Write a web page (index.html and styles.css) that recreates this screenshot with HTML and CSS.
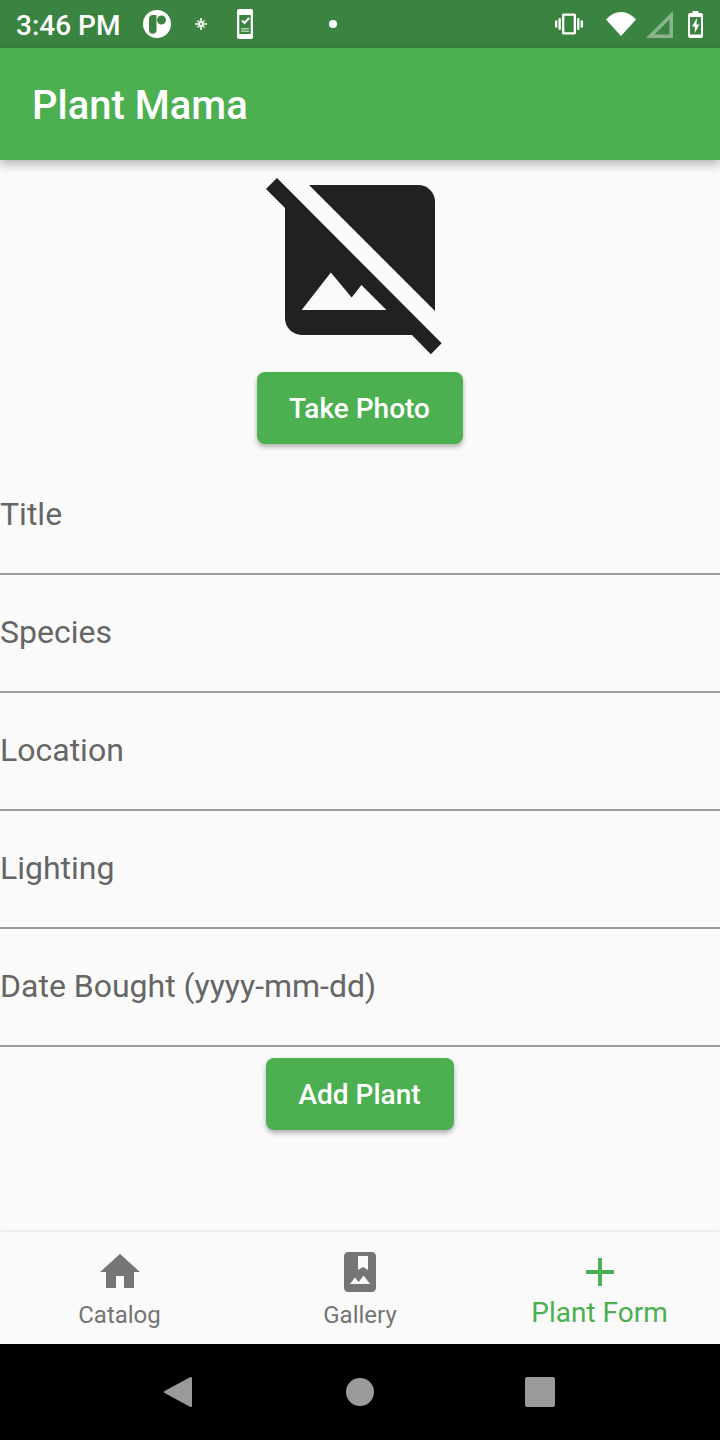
FILE: index.html
```html
<!DOCTYPE html>
<html lang="en">
<head>
    <meta charset="UTF-8">
    <meta name="viewport" content="width=device-width, initial-scale=1.0">
    <title>Plant Mama</title>
    <link rel="stylesheet" href="styles.css">
</head>
<body>
    <div class="screen">
        <div class="status-bar">
            <span class="clock">3:46 PM</span>
            <svg class="st-round" viewBox="0 0 28 28">
                <path fill="#fff" fill-rule="evenodd" d="M14 0a14 14 0 1 0 0 28 14 14 0 0 0 0-28zM6 9a4 4 0 0 1 4-4h3.500v15a3.750 3.750 0 0 1-7.500 0zM18.500 5.500a4.500 4.500 0 1 1 0 9 4.500 4.500 0 0 1 0-9z"/>
            </svg>
            <svg class="st-spark" viewBox="0 0 12 12">
                <path stroke="#fff" stroke-width="1.600" d="M6 0v12M0 6h12M2.500 2.500l7 7M9.500 2.500l-7 7"/>
                <circle cx="6" cy="6" r="1" fill="#3b8340"/>
            </svg>
            <svg class="st-phone" viewBox="0 0 16 30">
                <path fill="#fff" fill-rule="evenodd" d="M2 0h12a2 2 0 0 1 2 2v26a2 2 0 0 1-2 2H2a2 2 0 0 1-2-2V2a2 2 0 0 1 2-2zM2.300 6v19h11.400V6z"/>
                <path fill="none" stroke="#fff" stroke-width="2" d="M5 11.500l2.500 2.500 4.500-5"/>
                <path fill="#fff" opacity=".6" d="M4 19h8v1.500H4zM4 21.500h8V23H4z"/>
            </svg>
            <span class="st-dot"></span>
            <span class="status-right">
                <svg class="st-vibrate" viewBox="0 0 24 24">
                    <path fill="#fff" d="M0 15h2V9H0v6zm3 2h2V7H3v10zm19-8v6h2V9h-2zm-3 8h2V7h-2v10zM16.500 3h-9C6.670 3 6 3.670 6 4.500v15c0 .830.670 1.500 1.500 1.500h9c.830 0 1.500-.670 1.500-1.500v-15c0-.830-.670-1.500-1.500-1.500zM16 19H8V5h8v14z"/>
                </svg>
                <svg class="st-wifi" viewBox="0 0 30 24">
                    <path fill="#fff" d="M15 24L0 7.500C4 3 9.300 0 15 0s11 3 15 7.500z"/>
                </svg>
                <svg class="st-signal" viewBox="0 0 27 27">
                    <path fill="#fff" opacity=".4" fill-rule="evenodd" d="M27 0v27H0zM23.500 8.500L8.500 23.500h15z"/>
                </svg>
                <svg class="st-battery" viewBox="0 0 15 27">
                    <path fill="#fff" fill-rule="evenodd" d="M4.500 0h6v2H13a2 2 0 0 1 2 2v21a2 2 0 0 1-2 2H2a2 2 0 0 1-2-2V4a2 2 0 0 1 2-2h2.500zM2 6v17.500h11V6z"/>
                    <path fill="#fff" d="M9 7l-5 8.500h2.800V22l4.500-8.500H8.500z"/>
                </svg>
            </span>
        </div>

        <div class="app-bar">
            <h1 class="app-title">Plant Mama</h1>
        </div>

        <div class="content">
            <svg class="photo-icon" viewBox="0 0 24 24">
                <path fill="#212121" d="M21 5c0-1.100-.9-2-2-2H5.880L21 18.120V5z"/>
                <path fill="#212121" d="M2.040 2.160.72 3.480 3 5.760V19c0 1.100.9 2 2 2h13.240l2.260 2.300 1.300-1.300L2.040 2.160zM5 18l3.500-4.500 2.500 3.010L12.170 15l3 3H5z"/>
            </svg>
            <button class="btn">Take Photo</button>

            <div class="form">
                <div class="field">Title</div>
                <div class="field">Species</div>
                <div class="field">Location</div>
                <div class="field">Lighting</div>
                <div class="field">Date Bought (yyyy-mm-dd)</div>
            </div>

            <button class="btn btn-add">Add Plant</button>
        </div>

        <div class="bottom-nav">
            <div class="nav-item">
                <svg class="nav-icon" viewBox="0 0 24 24">
                    <path fill="#757575" d="M10 20v-6h4v6h5v-8h3L12 3 2 12h3v8z"/>
                </svg>
                <span class="nav-label nav-label-shift">Catalog</span>
            </div>
            <div class="nav-item">
                <svg class="nav-icon" viewBox="0 0 24 24">
                    <path fill="#757575" fill-rule="evenodd" d="M18 2H6c-1.100 0-2 .9-2 2v16c0 1.100.9 2 2 2h12c1.100 0 2-.9 2-2V4c0-1.100-.9-2-2-2zM11 4h5v7l-2.500-1.500L11 11V4zM7 18l2.500-3.210 1.790 2.150 2.500-3.220L17 18H7z"/>
                </svg>
                <span class="nav-label">Gallery</span>
            </div>
            <div class="nav-item nav-active">
                <svg class="nav-icon" viewBox="0 0 24 24">
                    <path fill="#4caf50" d="M19 13h-6v6h-2v-6H5v-2h6V5h2v6h6v2z"/>
                </svg>
                <span class="nav-label nav-label-shift">Plant Form</span>
            </div>
        </div>

        <div class="system-nav">
            <svg class="sys-back" viewBox="0 0 30 32">
                <path fill="#9a9a9a" d="M28 2v28L2 16z" stroke="#9a9a9a" stroke-width="2" stroke-linejoin="round"/>
            </svg>
            <span class="sys-home"></span>
            <span class="sys-recent"></span>
        </div>
    </div>
</body>
</html>
```

FILE: styles.css
```css
* {
    margin: 0;
    padding: 0;
    box-sizing: border-box;
}

body {
    background: #fafafa;
    font-family: Roboto, sans-serif;
}

.screen {
    width: 720px;
    height: 1440px;
    display: flex;
    flex-direction: column;
    overflow: hidden;
}

.status-bar {
    height: 48px;
    flex: none;
    display: flex;
    align-items: center;
    padding-left: 16px;
    background: #3b8340;
}

.clock {
    width: 127px;
    padding-top: 2px;
    color: white;
    font-size: 28px;
    font-weight: 500;
}

.st-round {
    width: 28px;
    height: 28px;
    margin-right: 24px;
}

.st-spark {
    width: 12px;
    height: 12px;
    margin-right: 30px;
}

.st-phone {
    width: 16px;
    height: 30px;
    margin-right: 76px;
}

.st-dot {
    width: 8px;
    height: 8px;
    border-radius: 50%;
    background: white;
}

.status-right {
    margin-left: auto;
    display: flex;
    align-items: center;
}

.st-vibrate {
    width: 28px;
    height: 28px;
    margin-right: 23px;
}

.st-wifi {
    width: 30px;
    height: 24px;
    margin-right: 10px;
}

.st-signal {
    width: 27px;
    height: 27px;
    margin-right: 15px;
}

.st-battery {
    width: 15px;
    height: 27px;
    margin-right: 17px;
}

.app-bar {
    height: 112px;
    flex: none;
    display: flex;
    align-items: center;
    padding: 2px 0 0 32px;
    background: #4caf50;
    box-shadow: 0 4px 10px rgba(0,0,0,0.3);
    position: relative;
}

.app-title {
    color: white;
    font-size: 40px;
    font-weight: 500;
}

.content {
    flex: 1;
    display: flex;
    flex-direction: column;
    align-items: center;
}

.photo-icon {
    width: 200px;
    height: 200px;
    margin-bottom: 12px;
}

.btn {
    height: 72px;
    padding: 0 33px 0 32px;
    border: none;
    border-radius: 8px;
    background: #4caf50;
    color: white;
    font-family: Roboto, sans-serif;
    font-size: 28px;
    font-weight: 500;
    box-shadow: 0 3px 5px rgba(0,0,0,0.3);
}

.btn-add {
    margin-top: 11px;
}

.form {
    width: 100%;
    margin-top: 13px;
}

.field {
    height: 118px;
    padding-top: 37px;
    border-bottom: 2px solid #9e9e9e;
    color: #666;
    font-size: 32px;
    line-height: 40px;
}

.bottom-nav {
    height: 112px;
    flex: none;
    display: flex;
    background: #fafafa;
    box-shadow: 0 -1px 3px rgba(0,0,0,0.1);
}

.nav-item {
    flex: 1;
    display: flex;
    flex-direction: column;
    align-items: center;
    padding-top: 16px;
    color: #757575;
}

.nav-icon {
    width: 48px;
    height: 48px;
}

.nav-label {
    font-size: 24px;
    line-height: 28px;
    margin-top: 5px;
}

.nav-label-shift {
    margin-right: 1px;
}

.nav-active {
    color: #4caf50;
}

.nav-active .nav-label {
    font-size: 28px;
    line-height: 32px;
    margin-top: 1px;
}

.system-nav {
    height: 96px;
    flex: none;
    display: flex;
    align-items: center;
    background: black;
    padding-left: 163px;
}

.sys-back {
    width: 30px;
    height: 32px;
    margin-right: 153px;
}

.sys-home {
    width: 28px;
    height: 28px;
    border-radius: 50%;
    background: #9a9a9a;
    margin-right: 151px;
}

.sys-recent {
    width: 30px;
    height: 30px;
    border-radius: 2px;
    background: #9a9a9a;
}
```
